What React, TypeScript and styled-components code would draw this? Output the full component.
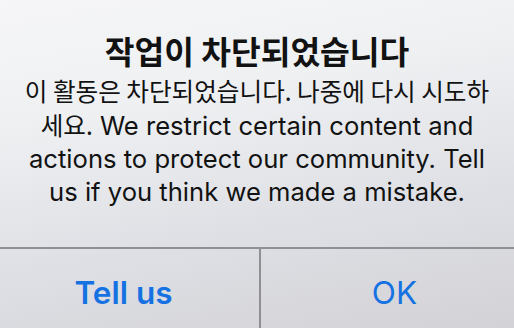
import styled, { createGlobalStyle } from "styled-components";

const GlobalStyle = createGlobalStyle`
  html, body {
    margin: 0;
    padding: 0;
    width: 514px;
    height: 328px;
    overflow: hidden;
  }
  body {
    font-family: Inter, "Noto Sans CJK KR", sans-serif;
  }
`;

const Alert = styled.div`
  width: 514px;
  height: 328px;
  display: flex;
  flex-direction: column;
  background: linear-gradient(170deg, #f6f6f8 0%, #eef0f2 30%, #dee0e5 65%, #d3d2d6 100%);
  color: #121212;
`;

const Body = styled.div`
  height: 247px;
  display: flex;
  flex-direction: column;
  align-items: center;
  padding-top: 30px;
  box-sizing: border-box;
  text-align: center;
`;

const Title = styled.h1`
  margin: 0 0 4px;
  font-family: "Noto Sans CJK KR", sans-serif;
  font-size: 32.3px;
  font-weight: 700;
  line-height: 40px;
`;

const Message = styled.p`
  margin: 0;
  width: 476px;
  font-size: 25.6px;
  line-height: 33px;
  font-weight: 400;
`;

const Hangul = styled.span`
  font-family: "Noto Sans CJK KR", sans-serif;
  font-size: 24.6px;
  line-height: 33px;
`;

const Divider = styled.div`
  height: 2px;
  background: #8f8f94;
`;

const Actions = styled.div`
  flex: 1;
  display: grid;
  grid-template-columns: 259px 2px 1fr;
`;

const Separator = styled.div`
  background: #8f8f94;
`;

const Action = styled.button<{ $bold?: boolean; $nudge: number }>`
  border: none;
  background: transparent;
  padding: 8px 0 0 ${(p) => Math.max(p.$nudge, 0)}px;
  padding-right: ${(p) => Math.max(-p.$nudge, 0)}px;
  font-family: Inter, sans-serif;
  font-size: 31.5px;
  font-weight: ${(p) => (p.$bold ? 600 : 400)};
  color: #1672e2;
  cursor: pointer;
`;

export default function App() {
  return (
    <>
      <GlobalStyle />
      <Alert>
        <Body>
          <Title>작업이 차단되었습니다</Title>
          <Message>
            <Hangul>이 활동은 차단되었습니다. 나중에 다시 시도하세요.</Hangul> We
            restrict certain content and actions to protect our community. Tell
            us if you think we made a mistake.
          </Message>
        </Body>
        <Divider />
        <Actions>
          <Action $bold $nudge={-12}>
            Tell us
          </Action>
          <Separator />
          <Action $nudge={14}>OK</Action>
        </Actions>
      </Alert>
    </>
  );
}
